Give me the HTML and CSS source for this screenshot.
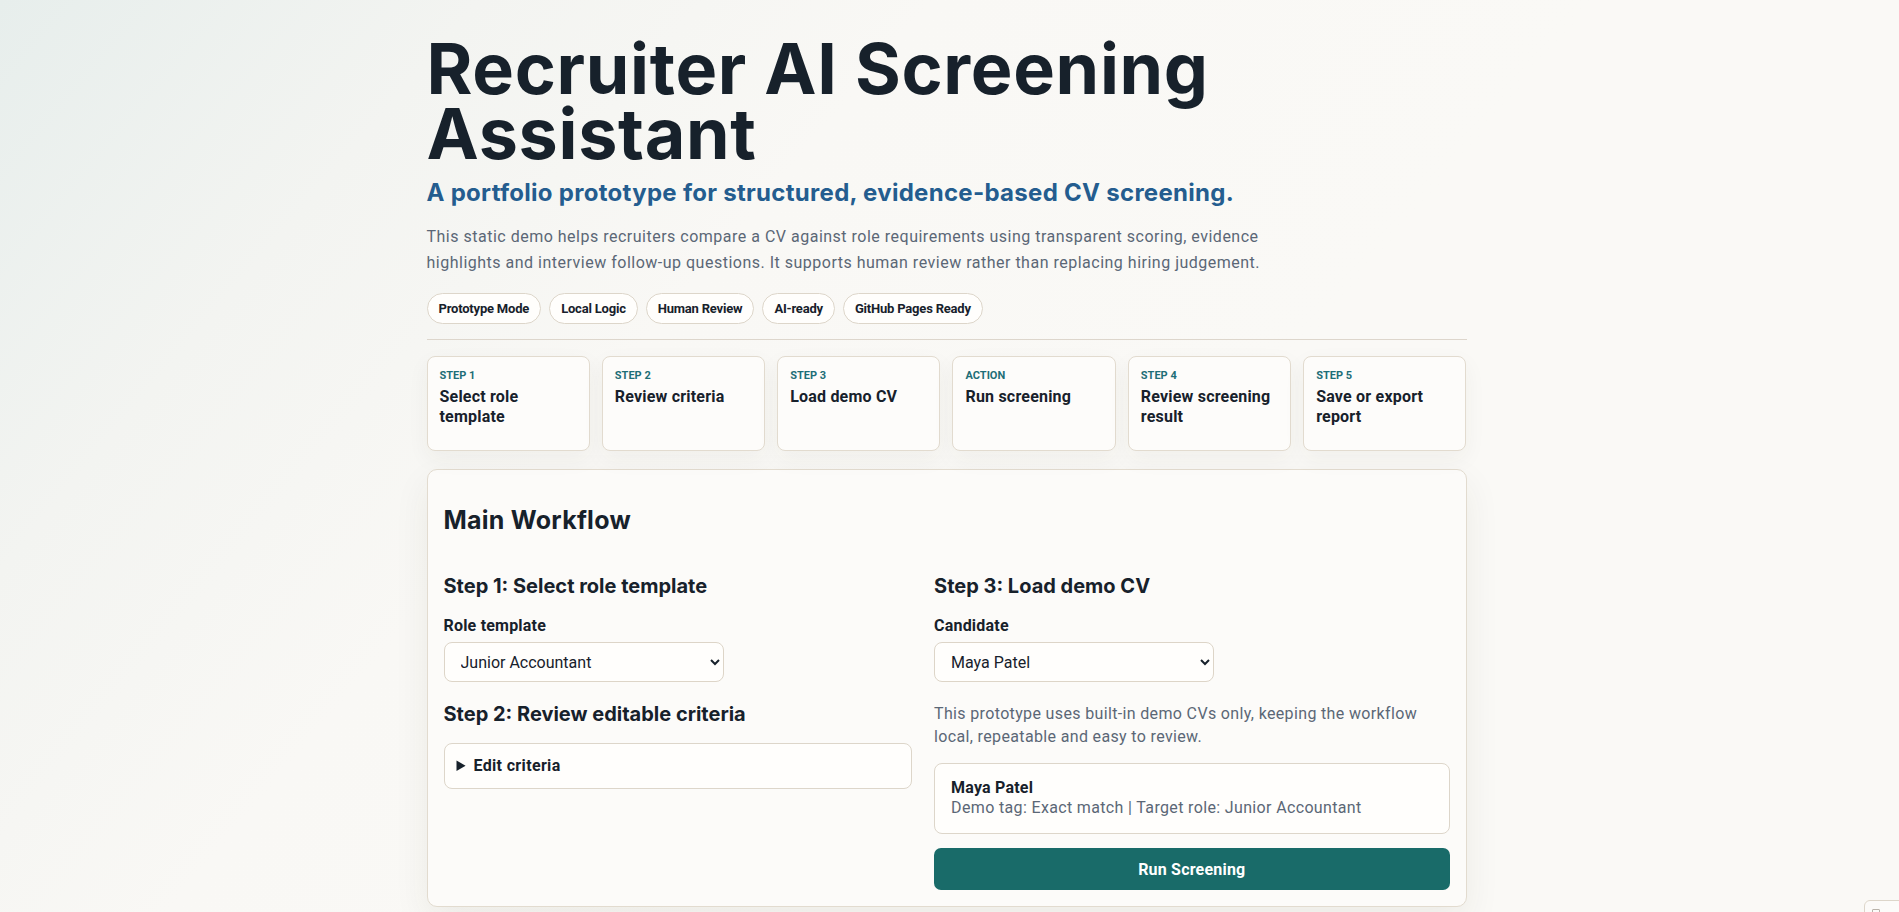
FILE: index.html
```html
<!DOCTYPE html>
<html lang="en">
<head>
  <meta charset="UTF-8" />
  <title>Recruiter AI Screening Assistant</title>
  <meta name="viewport" content="width=device-width, initial-scale=1.0">
  <link rel="stylesheet" href="styles.css">
</head>
<body>
  <main class="page">
    <header class="hero">
      <h1>Recruiter AI Screening Assistant</h1>
      <p class="subtitle">A portfolio prototype for structured, evidence-based CV screening.</p>
      <p class="intro">This static demo helps recruiters compare a CV against role requirements using transparent scoring, evidence highlights and interview follow-up questions. It supports human review rather than replacing hiring judgement.</p>
      <div class="tags">
        <span class="tag">Prototype Mode</span>
        <span class="tag">Local Logic</span>
        <span class="tag">Human Review</span>
        <span class="tag">AI-ready</span>
        <span class="tag">GitHub Pages Ready</span>
      </div>
    </header>

    <hr class="divider">

    <ol class="steps">
      <li class="step-card"><span class="step-label">Step 1</span><span class="step-title">Select role template</span></li>
      <li class="step-card"><span class="step-label">Step 2</span><span class="step-title">Review criteria</span></li>
      <li class="step-card"><span class="step-label">Step 3</span><span class="step-title">Load demo CV</span></li>
      <li class="step-card"><span class="step-label">Action</span><span class="step-title">Run screening</span></li>
      <li class="step-card"><span class="step-label">Step 4</span><span class="step-title">Review screening result</span></li>
      <li class="step-card"><span class="step-label">Step 5</span><span class="step-title">Save or export report</span></li>
    </ol>

    <section class="panel">
      <h2>Main Workflow</h2>
      <div class="workflow">
        <div class="col">
          <h3>Step 1: Select role template</h3>
          <label class="field-label" for="roleSelect">Role template</label>
          <select id="roleSelect" class="select">
            <option>Junior Accountant</option>
            <option>Customer Support Advisor</option>
            <option>Marketing Assistant</option>
          </select>

          <h3 class="gap-top">Step 2: Review editable criteria</h3>
          <details class="criteria">
            <summary>Edit criteria</summary>
            <p>Criteria weights can be adjusted here.</p>
          </details>
        </div>

        <div class="col">
          <h3>Step 3: Load demo CV</h3>
          <label class="field-label" for="candidateSelect">Candidate</label>
          <select id="candidateSelect" class="select">
            <option>Maya Patel</option>
            <option>Daniel Brooks</option>
            <option>Sofia Nguyen</option>
          </select>
          <p class="note">This prototype uses built-in demo CVs only, keeping the workflow local, repeatable and easy to review.</p>

          <div class="candidate-card">
            <strong>Maya Patel</strong>
            <span>Demo tag: Exact match | Target role: Junior Accountant</span>
          </div>

          <button class="run-btn" type="button">Run Screening</button>
        </div>
      </div>
    </section>
  </main>

  <div class="corner-btn"><span class="corner-icon"></span></div>
</body>
</html>
```

FILE: styles.css
```css
body {
  margin: 0;
  padding-right: 6px;
  font-family: Roboto, "Noto Sans", Arial, sans-serif;
  letter-spacing: 0.35px;
  color: #17212b;
  background: #faf9f6 linear-gradient(130deg, #e7eeec 0%, #f3f4f1 18%, #f9f8f5 35%, #faf9f6 60%);
  min-height: 100vh;
}
.page {
  max-width: 1040px;
  margin: 0 auto;
  padding-top: 36px;
}
h1 {
  font-family: Inter, "Liberation Sans", sans-serif;
  font-size: 70px;
  line-height: 65px;
  font-weight: 700;
  letter-spacing: 0.01em;
  margin: 0;
  max-width: 900px;
  color: #17212b;
}
.subtitle {
  font-family: Inter, "Liberation Sans", sans-serif;
  font-size: 24px;
  line-height: 30px;
  font-weight: 700;
  letter-spacing: 0.012em;
  color: #245d8f;
  margin: 12px 0 0;
}
.intro {
  font-size: 16px;
  line-height: 26px;
  letter-spacing: 0.5px;
  color: #5b6776;
  margin: 16px 0 0;
  max-width: 880px;
}
.tags {
  display: flex;
  gap: 8px;
  margin-top: 17px;
}
.tag {
  font-size: 13px;
  font-weight: 700;
  line-height: 17px;
  letter-spacing: -0.2px;
  padding: 6px 11px;
  border: 1px solid #ddd6ca;
  border-radius: 999px;
  background: #fffefc;
  color: #17212b;
}
.divider {
  border: none;
  border-top: 1px solid #ddd6cc;
  margin: 15px 0 0;
}
.steps {
  list-style: none;
  padding: 0;
  margin: 16px 0 0;
  display: grid;
  grid-template-columns: repeat(6, 1fr);
  gap: 12px;
}
.step-card {
  display: flex;
  flex-direction: column;
  min-height: 95px;
  box-sizing: border-box;
  padding: 11px 12px 10px;
  border: 1px solid #e2dbcf;
  border-radius: 8px;
  background: #fdfcfa;
  box-shadow: 0 8px 22px rgba(60, 50, 30, 0.05);
}
.step-label {
  font-size: 11px;
  line-height: 16px;
  font-weight: 700;
  letter-spacing: 0;
  text-transform: uppercase;
  color: #1d6e77;
  margin-bottom: 3px;
}
.step-title {
  font-size: 16px;
  line-height: 20px;
  font-weight: 700;
  letter-spacing: 0.2px;
}
.panel {
  margin-top: 18px;
  padding: 16px;
  border: 1px solid #e2dbcf;
  border-radius: 10px;
  background: #fcfbf9;
  box-shadow: 0 14px 36px rgba(60, 50, 30, 0.07);
}
.panel h2 {
  font-family: Inter, "Liberation Sans", sans-serif;
  font-size: 25px;
  line-height: 29px;
  font-weight: 700;
  letter-spacing: 0.01em;
  margin: 20px 0 39px;
}
.workflow {
  display: grid;
  grid-template-columns: 1fr 1.1fr;
  gap: 22px;
}
.col h3 {
  font-family: Inter, "Liberation Sans", sans-serif;
  font-size: 20px;
  line-height: 25px;
  font-weight: 700;
  letter-spacing: 0;
  margin: 0;
}
.col h3.gap-top {
  margin-top: 20px;
}
.field-label {
  display: block;
  font-size: 16px;
  line-height: 20px;
  font-weight: 700;
  letter-spacing: 0.2px;
  margin-top: 17px;
}
.select {
  display: block;
  width: 280px;
  height: 40px;
  margin-top: 6px;
  padding: 0 12px;
  font-family: Roboto, "Noto Sans", sans-serif;
  font-size: 16px;
  color: #17212b;
  background: #fffefc;
  border: 1px solid #ddd5c8;
  border-radius: 8px;
}
.criteria {
  margin-top: 16px;
  border: 1px solid #ddd6ca;
  border-radius: 8px;
  background: #fffefc;
  padding: 12px;
}
.criteria summary {
  font-size: 16px;
  line-height: 20px;
  font-weight: 700;
  cursor: pointer;
}
.note {
  font-size: 16px;
  line-height: 23px;
  color: #5b6776;
  margin: 20px 0 0;
}
.candidate-card {
  display: flex;
  flex-direction: column;
  margin-top: 15px;
  padding: 14px 16px 15px;
  border: 1px solid #ddd6ca;
  border-radius: 8px;
  background: #fffefc;
  font-size: 16px;
  line-height: 20px;
}
.candidate-card strong {
  letter-spacing: 0.2px;
}
.candidate-card span {
  color: #5b6776;
}
.run-btn {
  display: block;
  width: 100%;
  height: 42px;
  margin-top: 14px;
  border: none;
  border-radius: 7px;
  background: #196b69;
  color: #fff;
  font-family: Roboto, "Noto Sans", sans-serif;
  font-size: 16px;
  font-weight: 700;
  letter-spacing: 0.2px;
  cursor: pointer;
}
.corner-btn {
  position: fixed;
  left: 1864px;
  top: 900px;
  width: 60px;
  height: 40px;
  border: 1px solid #ddd6ca;
  border-radius: 6px;
  background: #fcfbf9;
}
.corner-icon {
  position: absolute;
  left: 7px;
  top: 8px;
  width: 6px;
  height: 6px;
  border: 1px solid #b9b3aa;
  border-radius: 1px;
}
```
